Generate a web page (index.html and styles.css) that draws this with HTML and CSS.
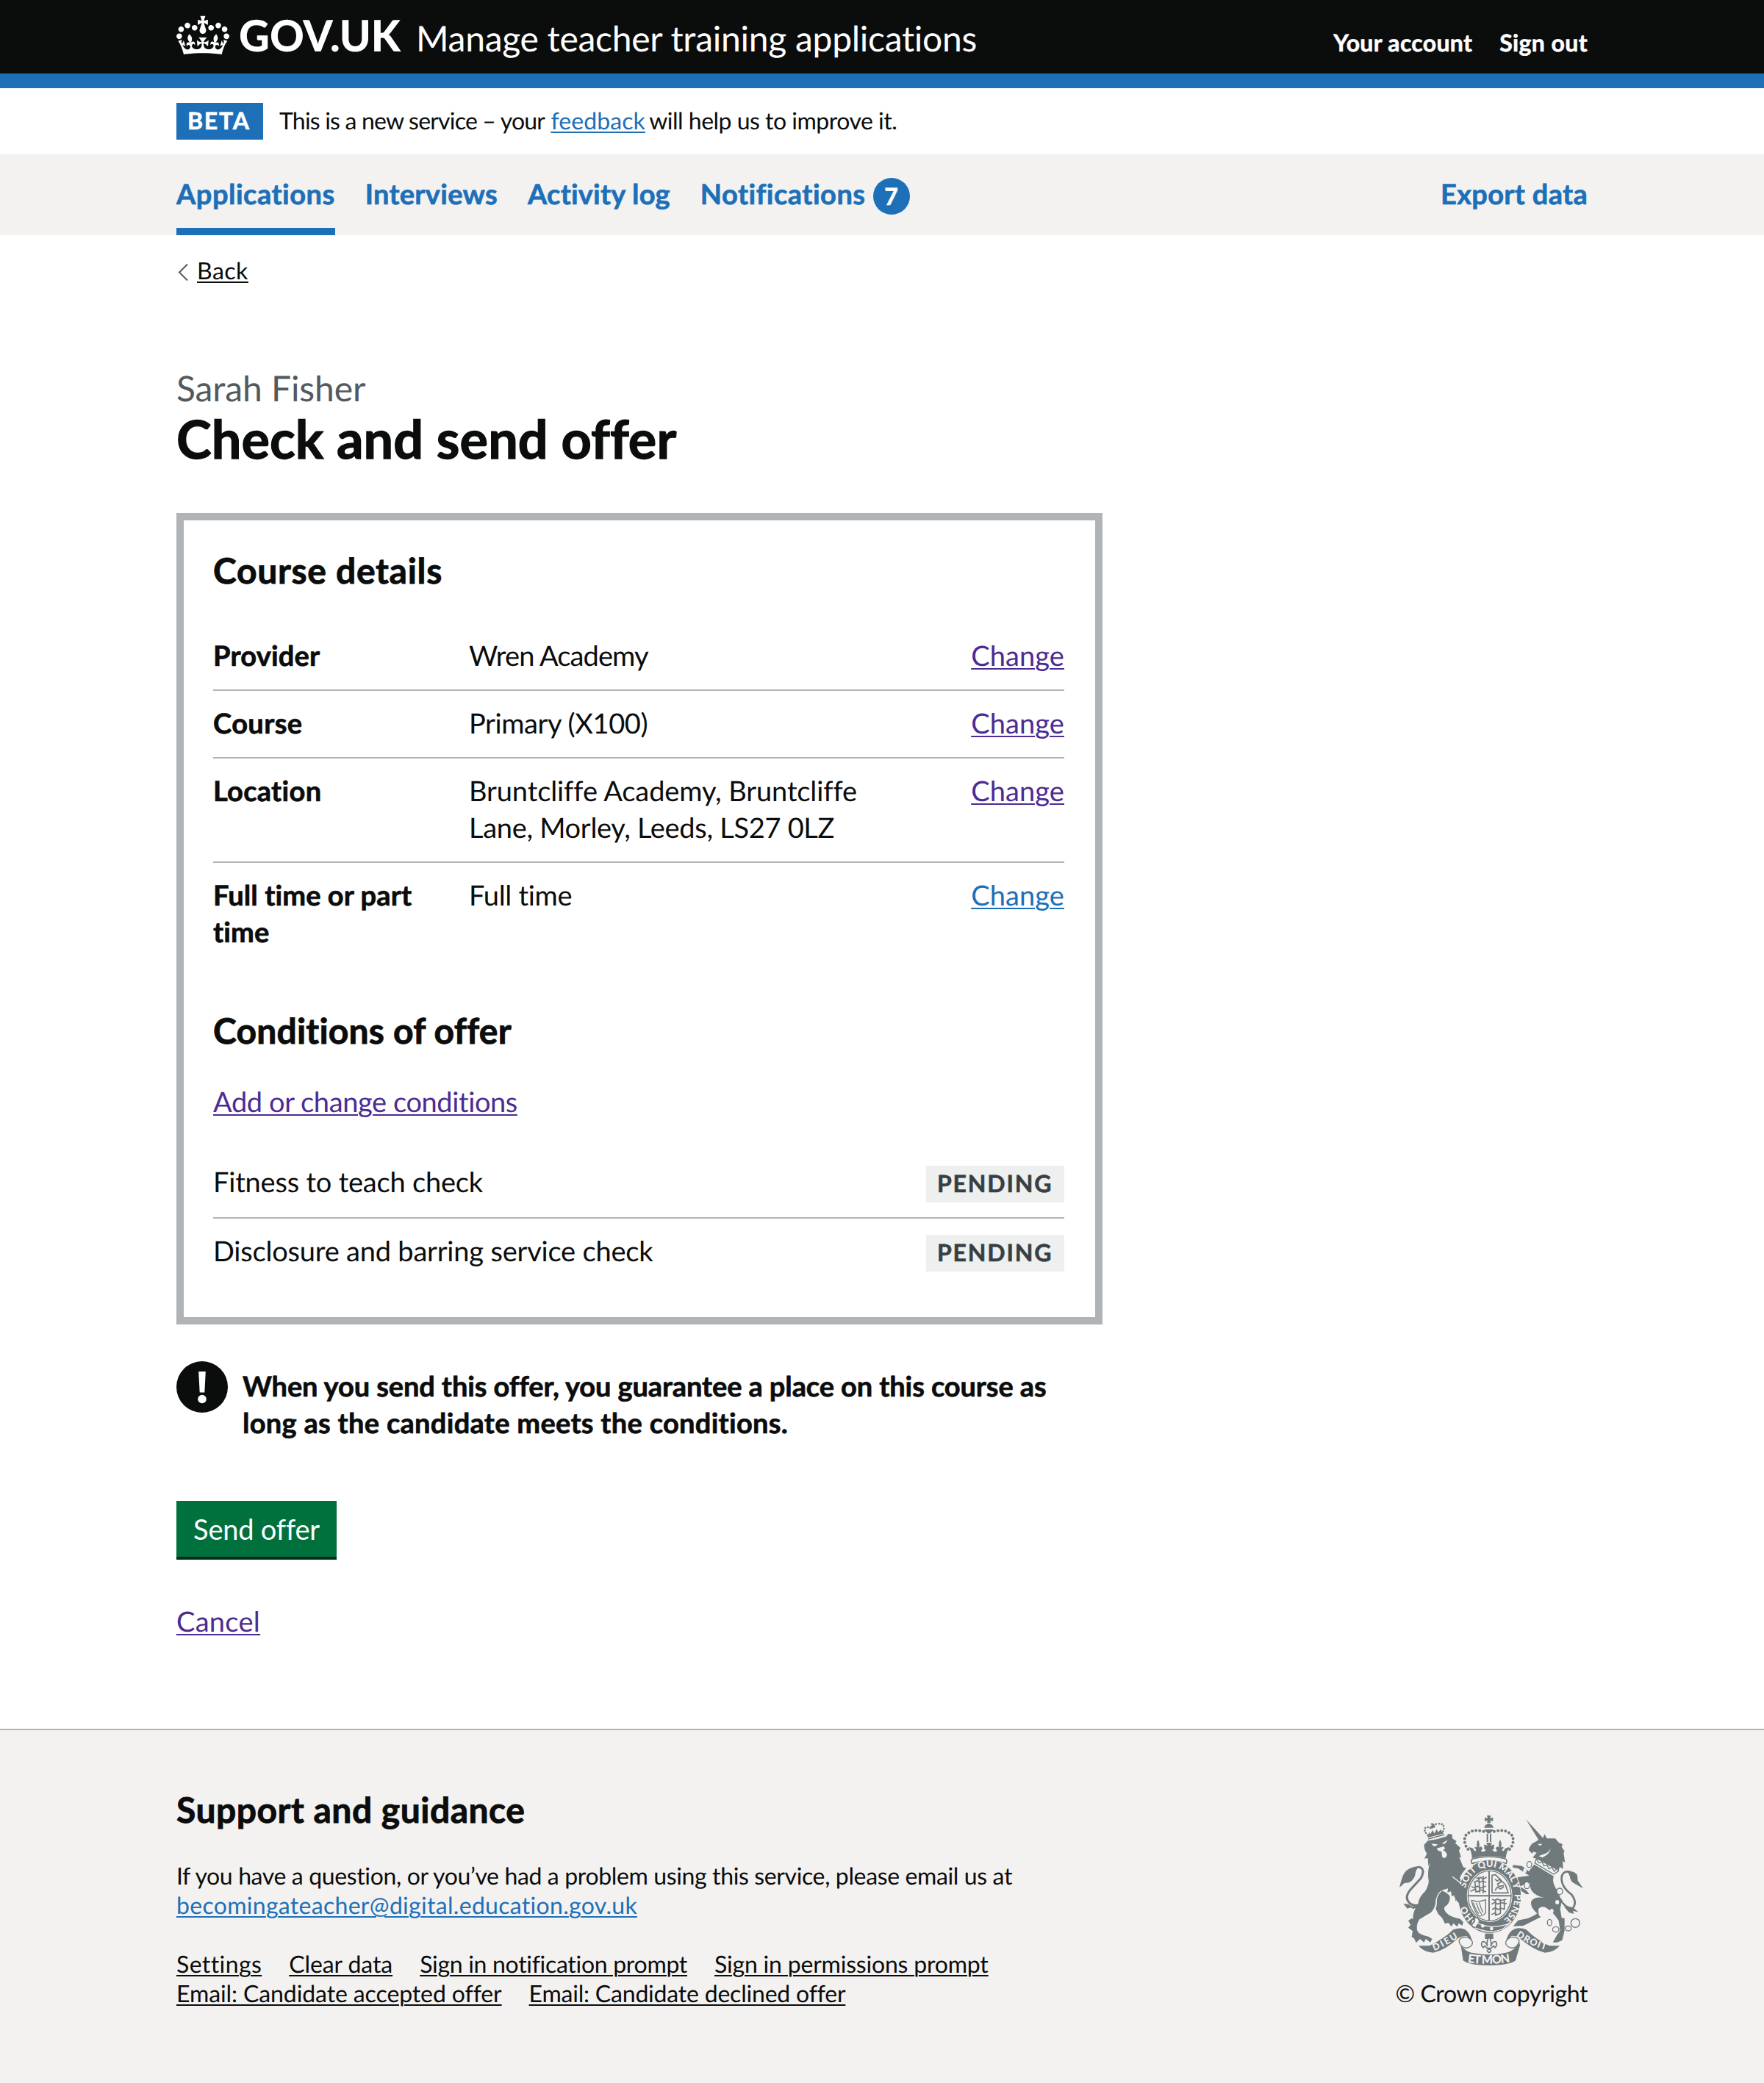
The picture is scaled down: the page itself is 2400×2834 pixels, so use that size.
FILE: index.html
```html
<!DOCTYPE html>
<html lang="en">
<head>
<meta charset="utf-8">
<title>Check and send offer - Manage teacher training applications</title>
<link rel="stylesheet" href="styles.css">
</head>
<body>
<header class="header">
  <div class="container header-row">
    <a class="brand" href="#">
      <svg class="logotype" width="310" height="78" viewBox="0 -8 310 78" fill="#fff">
        <g transform="translate(0 8.7) scale(.5454)"><path fill-rule="evenodd" d="M25 30.2c3.5 1.5 7.7-.2 9.1-3.7 1.5-3.6-.2-7.8-3.9-9.2-3.6-1.4-7.6.3-9.1 3.9-1.4 3.5.3 7.5 3.9 9zM9 39.5c3.6 1.5 7.8-.2 9.2-3.7 1.5-3.6-.2-7.8-3.9-9.1-3.6-1.5-7.6.2-9.1 3.8-1.4 3.5.3 7.5 3.8 9zM4.4 57.2c3.5 1.5 7.7-.2 9.1-3.8 1.5-3.6-.2-7.7-3.9-9.1-3.5-1.5-7.6.3-9.1 3.8-1.4 3.5.3 7.6 3.9 9.1zm38.3-21.4c3.5 1.5 7.7-.2 9.1-3.8 1.5-3.6-.2-7.7-3.9-9.1-3.6-1.5-7.6.3-9.1 3.8-1.3 3.6.4 7.7 3.9 9.1zm64.4-5.6c-3.6 1.5-7.8-.2-9.1-3.7-1.5-3.6.2-7.8 3.8-9.2 3.6-1.4 7.7.3 9.2 3.9 1.3 3.5-.4 7.5-3.9 9zm15.9 9.3c-3.6 1.5-7.7-.2-9.1-3.7-1.5-3.6.2-7.8 3.7-9.1 3.6-1.5 7.7.2 9.2 3.8 1.5 3.5-.3 7.5-3.8 9zm4.7 17.7c-3.6 1.5-7.8-.2-9.2-3.8-1.5-3.6.2-7.7 3.9-9.1 3.6-1.5 7.7.3 9.2 3.8 1.3 3.5-.4 7.6-3.9 9.1zM89.3 35.8c-3.6 1.5-7.8-.2-9.2-3.8-1.4-3.6.2-7.7 3.9-9.1 3.6-1.5 7.7.3 9.2 3.8 1.4 3.6-.3 7.7-3.9 9.1zM69.7 17.7l8.9 4.7V9.3l-8.9 2.8c-.2-.3-.5-.6-.9-.9L72.4 0H59.6l3.5 11.2c-.3.3-.6.5-.9.9l-8.8-2.8v13.1l8.8-4.7c.3.3.6.7.9.9l-5 15.4v.1c-.2.8-.4 1.6-.4 2.4 0 4.1 3.1 7.5 7 8.1h.2c.3 0 .7.1 1 .1.4 0 .7 0 1-.1h.2c4-.6 7.1-4.1 7.1-8.1 0-.8-.1-1.7-.4-2.4V34l-5.1-15.4c.4-.2.7-.6 1-.9zM66 92.8c16.9 0 32.8 1.1 47.1 3.2 4-16.9 8.9-26.7 14-33.5l-9.6-3.4c1 4.9 1.1 7.2 0 10.2-1.5-1.4-3-4.3-4.2-8.7L108.6 76c2.8-2 5-3.2 7.5-3.3-4.4 9.4-10 11.9-13.6 11.2-4.3-.8-6.3-4.6-5.6-7.9 1-4.7 5.7-5.9 8-.5 4.3-8.7-3-11.4-7.6-8.8 7.1-7.2 7.9-13.5 2.1-21.1-8 6.1-8.1 12.3-4.5 20.8-4.7-5.4-12.1-2.5-9.5 6.2 3.4-5.2 7.9-2 7.2 3.1-.6 4.3-6.4 7.8-13.5 7.2-10.3-.9-10.9-8-11.2-13.8 2.5-.5 7.1 1.8 11 7.3L80.2 60c-4.1 4.4-8 5.3-12.3 5.4 1.4-4.4 8-11.6 8-11.6H55.5s6.4 7.2 7.9 11.6c-4.2-.1-8-1-12.3-5.4l1.4 16.4c3.9-5.5 8.5-7.7 10.9-7.3-.3 5.8-.9 12.8-11.1 13.8-7.2.6-12.9-2.9-13.5-7.2-.7-5 3.8-8.3 7.1-3.1 2.7-8.7-4.6-11.6-9.4-6.2 3.7-8.5 3.6-14.7-4.6-20.8-5.8 7.6-5 13.9 2.2 21.1-4.7-2.6-11.9.1-7.7 8.8 2.3-5.5 7.1-4.2 8.1.5.7 3.3-1.3 7.1-5.7 7.9-3.5.7-9-1.8-13.5-11.2 2.5.1 4.7 1.3 7.5 3.3l-4.7-15.4c-1.2 4.4-2.7 7.2-4.3 8.7-1.1-3-.9-5.3 0-10.2l-9.5 3.4c5 6.9 9.9 16.7 14 33.5 14.8-2.1 30.8-3.2 47.7-3.2z"/></g>
        <text class="logotype-text" x="85" y="57" textLength="220" lengthAdjust="spacingAndGlyphs">GOV.UK</text>
      </svg>
      <span class="service-name">Manage teacher training applications</span>
    </a>
    <nav class="account">
      <a class="track-p3" href="#">Your account</a>
      <a class="track-p4" href="#">Sign out</a>
    </nav>
  </div>
</header>

<div class="container phase">
  <strong class="tag tag-beta">BETA</strong>
  <span class="phase-text"><span class="track-n8">This is a new service – your</span> <a class="link track-p1" href="#">feedback</a> <span class="phase-end">will help us to improve it.</span></span>
</div>

<nav class="primary">
  <div class="container primary-row">
    <a class="current track-p5" href="#">Applications</a>
    <a class="track-p3" href="#">Interviews</a>
    <a class="track-p2" href="#">Activity log</a>
    <a class="track-p5" href="#">Notifications</a>
    <span class="count">7</span>
    <a class="export track-p3" href="#">Export data</a>
  </div>
</nav>

<main class="container main">
  <a class="back" href="#"><svg width="16" height="24" viewBox="0 0 16 24" fill="none" stroke="#505a5f" stroke-width="2"><path d="M15 1.500L4 12.500l11 11"/></svg><span class="link link-black track-p5">Back</span></a>

  <p class="caption track-n1">Sarah Fisher</p>
  <h1 class="track-p1">Check and send offer</h1>

  <section class="panel">
    <h2 class="track-p7">Course details</h2>
    <dl class="summary">
      <div class="row"><dt class="track-p2">Provider</dt><dd class="track-n9">Wren Academy</dd><a class="link visited track-p1" href="#">Change</a></div>
      <div class="row"><dt class="track-p4">Course</dt><dd class="track-n4">Primary (X100)</dd><a class="link visited track-p1" href="#">Change</a></div>
      <div class="row"><dt class="track-p3">Location</dt><dd><span class="track-n1">Bruntcliffe Academy, Bruntcliffe</span><br><span class="track-n3">Lane, Morley, Leeds, LS27 0LZ</span></dd><a class="link visited track-p1" href="#">Change</a></div>
      <div class="row"><dt class="track-p1">Full time or part<br>time</dt><dd class="track-n3">Full time</dd><a class="link track-p1" href="#">Change</a></div>
    </dl>
    <h2 class="conditions-title track-p2">Conditions of offer</h2>
    <p class="conditions-link"><a class="link visited track-n4" href="#">Add or change conditions</a></p>
    <ul class="conditions">
      <li><span class="track-n2">Fitness to teach check</span><strong class="tag tag-grey">PENDING</strong></li>
      <li><span class="track-n2">Disclosure and barring service check</span><strong class="tag tag-grey">PENDING</strong></li>
    </ul>
  </section>

  <div class="warning">
    <svg width="70" height="70" viewBox="0 0 70 70"><circle cx="35" cy="35" r="35" fill="#0b0c0c"/><path d="M30.200 14h9.600l-1.500 28.500h-6.600z" fill="#fff"/><circle cx="35" cy="51.500" r="5.800" fill="#fff"/></svg>
    <p><span class="track-n1">When you send this offer, you guarantee a place on this course as</span><br><span class="track-p3">long as the candidate meets the conditions.</span></p>
  </div>

  <button class="button track-n2" type="button">Send offer</button>
  <p class="cancel"><a class="link visited track-p3" href="#">Cancel</a></p>
</main>

<footer class="footer">
  <div class="container footer-row">
    <div class="footer-main">
      <h2 class="track-p5">Support and guidance</h2>
      <p><span class="contact">If you have a question, or you’ve had a problem using this service, please email us at</span><br><a class="link track-p3" href="#">becomingateacher@digital.education.gov.uk</a></p>
      <ul class="footer-links">
        <li><a class="link link-black track-p4" href="#">Settings</a></li>
        <li><a class="link link-black track-n1" href="#">Clear data</a></li>
        <li><a class="link link-black track-n3" href="#">Sign in notification prompt</a></li>
        <li><a class="link link-black track-n2" href="#">Sign in permissions prompt</a></li>
        <li><a class="link link-black track-n1" href="#">Email: Candidate accepted offer</a></li>
        <li><a class="link link-black track-n2" href="#">Email: Candidate declined offer</a></li>
      </ul>
    </div>
    <div class="copyright">
      <svg class="arms" width="250" height="204" viewBox="72 90 750 612" fill="#70797b" stroke-linejoin="round">
        <defs>
          <path id="garter" pathLength="100" d="M440 536A102 118 0 0 1 338 418A102 118 0 0 1 440 300A102 118 0 0 1 542 418A102 118 0 0 1 440 536"/>
          <path id="motto-left" d="M214 642Q262 624 322 582"/>
          <path id="motto-mid" d="M350 690Q440 702 540 686"/>
          <path id="motto-right" d="M548 582Q606 624 688 644"/>
        </defs>
        <!-- lion -->
        <path d="M172 211L188 193L225 187L262 176L272 165L287 167L288 184L305 195L300 203L321 222L315 234L324 262L316 260L332 300L345 306Q328 322 318 346L332 368Q350 398 345 436L338 452L326 434L318 448L310 428L300 440L302 414L286 420L282 400L268 404L270 388L243 396Q262 402 277 418Q281 440 266 456Q246 466 262 486Q280 506 320 512L333 526L328 540L314 530L308 544L292 530L284 544L272 528L258 532L246 508L230 492L220 470Q228 452 222 428Q218 480 190 492L154 514Q140 534 144 558Q150 578 190 584L206 594L198 608L180 594L172 608L156 594L140 610L132 592L122 586L126 562L108 548L118 536L108 520L122 510L128 514Q124 484 148 452Q150 424 178 398Q196 366 190 348Q186 310 198 282L190 296L188 264L174 266L184 246L176 232Z"/>
        <g fill="#f3f2f1"><path d="M202 205L228 208Q222 218 212 216zM246 204L268 190Q264 204 252 207zM224 224L254 216L258 226L250 232Q266 240 266 252Q258 272 246 258L244 238L230 234z"/></g>
        <path d="M288 340L322 366M243 398Q222 414 222 446" fill="none" stroke="#f3f2f1" stroke-width="4"/>
        <path d="M182 440Q140 470 114 448Q90 426 116 394L160 346Q180 306 150 300" fill="none" stroke="#70797b" stroke-width="9"/>
        <path d="M152 296Q108 300 90 328Q80 350 72 384L92 366L112 364Q136 350 138 322Q142 306 152 302zM88 450L108 452L126 462L156 448L148 464L128 472L118 466L104 470z"/>
        <g fill="none" stroke="#70797b"><path d="M188 170Q172 156 176 144Q182 132 204 144Q206 126 230 124Q254 122 254 142L250 156" stroke-width="8" stroke-linecap="round" stroke-dasharray="0 11"/><path d="M187 176L250 160" stroke-width="8"/><path d="M189 186L256 168" stroke-width="4"/></g>
        <path d="M200 122L212 122L208 132L218 130L216 140L207 140L206 146L200 140L196 134L204 132zM192 158L198 166L208 150L214 164L224 146L230 158L242 146L246 162L190 178z"/>
        <!-- crown -->
        <path d="M429 90h16l-3 12 12-4v16l-12-4 3 10h-16l3-10-12 4v-16l12 4zM418 140Q420 126 437 122Q454 126 456 140zM419 147h36Q450 160 437 164Q424 160 419 147z"/>
        <g fill="none" stroke="#70797b"><path d="M352 228Q330 200 342 172Q366 142 418 156" stroke-width="12" stroke-linecap="round" stroke-dasharray="0 15.500"/><path d="M522 228Q544 200 532 172Q508 142 456 156" stroke-width="12" stroke-linecap="round" stroke-dasharray="0 15.500"/><path d="M431 164v34M444 164v34" stroke-width="6"/></g>
        <path d="M355 218L374 226Q376 238 384 234Q386 226 378 222Q384 214 390 222Q384 204 393 190Q402 204 396 222Q402 212 410 222Q412 230 404 234Q414 244 426 230L418 228V208L432 214L426 202H450L444 214L458 208V228L450 230Q462 244 472 234Q464 230 466 222Q474 212 480 222Q474 204 483 190Q492 204 486 222Q492 214 498 222Q490 226 492 234Q500 238 502 226L521 218Q508 240 506 264Q438 246 368 264Q368 240 355 218Z"/>
        <path d="M374 266Q438 250 502 266Q514 270 508 286Q438 264 368 286Q360 270 374 266z" fill="#f3f2f1" stroke="#70797b" stroke-width="5"/>
        <!-- unicorn -->
        <path d="M588 105L658 182L664 166L674 184L708 184L722 200L738 208L734 218L746 236L742 244L748 282L738 276L740 308L726 300L722 316L630 266L616 262L632 242L618 238L614 246L600 232L602 222L612 206L640 190Z"/>
        <path d="M656 262Q690 246 690 216Q690 232 672 244L640 256zM636 206l20 0-10 8z" fill="#f3f2f1"/>
        <path d="M630 268L624 284L702 330L722 316L716 306L704 318L694 302L682 308L674 292L662 296L654 280L642 284z" fill="#f3f2f1" stroke="#70797b" stroke-width="4"/>
        <path d="M622 290L702 338Q692 360 716 396Q736 436 732 452L728 472L734 508L746 510V560L736 600L716 608H698L716 576L728 560L722 520Q700 484 676 470Q656 456 640 470Q636 500 650 504L578 540L536 542L556 518L596 510Q622 500 634 490Q604 464 610 440Q622 420 662 426Q600 412 606 366L580 372L564 380L590 396L602 410L590 412L570 398L540 364L556 342L602 336L556 306L534 302L536 292L572 296L600 318Z"/>
        <path d="M728 430Q744 466 778 470Q800 446 774 412Q730 380 734 340Q742 312 772 322" fill="none" stroke="#70797b" stroke-width="8"/>
        <path d="M758 318Q788 316 798 334L800 356L822 388L790 370Q768 360 768 340zM744 462L764 486L784 492L780 480L802 484L780 466z"/>
        <g fill="none" stroke="#70797b" stroke-width="4"><ellipse cx="602" cy="290" rx="10" ry="12"/><ellipse cx="592" cy="375" rx="11" ry="14" fill="#f3f2f1"/><ellipse cx="726" cy="400" rx="12" ry="13" fill="#f3f2f1"/><ellipse cx="685" cy="527" rx="9" ry="13"/><ellipse cx="710" cy="555" rx="13" ry="11"/><ellipse cx="761" cy="551" rx="12" ry="10"/><circle cx="790" cy="529" r="18"/></g>
        <g fill="#f3f2f1"><ellipse cx="584" cy="315" rx="7" ry="9"/><ellipse cx="716" cy="444" rx="8" ry="9"/><ellipse cx="694" cy="480" rx="7" ry="9"/></g>
        <!-- garter and shield -->
        <ellipse cx="440" cy="421" rx="131" ry="152" fill="#f3f2f1"/>
        <ellipse cx="440" cy="421" rx="128" ry="149"/>
        <ellipse cx="440" cy="418" rx="93" ry="107" fill="#f3f2f1"/>
        <ellipse cx="440" cy="418" rx="88" ry="102" fill="none" stroke="#70797b" stroke-width="4"/>
        <path d="M438 316V520M352 418H528" stroke="#70797b" stroke-width="6"/>
        <g fill="none" stroke="#70797b" stroke-width="5"><path d="M386 344l10 6 8-8 8 8 16-8M376 362l14-6 8 8 12-6 16 6M366 380l14 6 10-8 14 8 22-8M362 400l16-8 12 10 14-8 22 8M396 340l4 66M414 336v72M380 360l4 44"/><path d="M450 334l14-2 40 40 12 34h-66zM462 350l10 8 10-10 4 14-14 8 6 10 20-4M462 396l10-14 12 8 14-8"/><path d="M450 432l14 6 8-8 12 8 24-6M448 452l14-8 10 8 14-6 24 4M450 474l14-8 10 8 12-6 16 6M448 494l14-6 8 8 14-6M464 432v68M484 432v60M500 434v40"/></g>
        <path d="M366 436Q396 446 424 434V488Q408 506 394 498Q376 480 366 436zM374 446Q380 474 396 490M386 446Q392 472 408 494M398 444Q402 466 414 486" fill="none" stroke="#70797b" stroke-width="4"/>
        <g class="motto"><text><textPath href="#garter" startOffset="10.500%">HO</textPath></text><text><textPath href="#garter" startOffset="29.500%">SOIT</textPath></text><text><textPath href="#garter" startOffset="43.500%">QUI</textPath></text><text><textPath href="#garter" startOffset="55%">MAL</textPath></text><text><textPath href="#garter" startOffset="67.500%">Y</textPath></text><text><textPath href="#garter" startOffset="74%">PENSE</textPath></text></g>
        <path d="M372 518Q430 560 520 532L496 552Q440 580 366 542z" stroke="#f3f2f1" stroke-width="4"/>
        <circle cx="412" cy="541" r="7" fill="#f3f2f1"/><circle cx="448" cy="552" r="7" fill="#f3f2f1"/>
        <path d="M398 520Q392 500 376 510Q384 524 370 530Q362 548 382 546" fill="#f3f2f1" stroke="#70797b" stroke-width="5"/>
        <path d="M310 444L296 422L300 400L288 396L318 368L340 390L348 430L338 452L328 434L320 448z"/>
        <!-- fleur-de-lis -->
        <path d="M421 572h34v22h-34z"/>
        <path d="M438 586Q426 602 431 622Q422 600 410 606Q402 618 414 630L420 622L430 632H446L456 622L462 630Q474 618 466 606Q454 600 445 622Q450 602 438 586zM438 632L430 642Q438 656 446 642z" fill="#f3f2f1" stroke="#70797b" stroke-width="5"/>
        <!-- ribbons -->
        <path d="M150 622H194Q250 596 292 556Q326 544 346 560Q364 576 370 608Q358 600 348 582Q330 580 312 590Q260 640 210 650Q170 648 150 622zM726 622H684Q628 596 590 556Q556 542 530 560Q512 576 506 608Q516 600 528 582Q546 578 562 590Q620 640 666 650Q706 648 726 622z"/>
        <path d="M318 592Q314 616 332 630Q352 652 378 652Q438 664 498 652Q524 650 544 630Q562 616 558 592L564 620L546 682Q520 702 438 702Q356 702 332 682z"/>
        <path d="M340 586Q308 590 318 612Q330 634 352 630Q376 620 368 602Q356 586 340 586zM536 586Q568 590 558 612Q546 634 524 630Q500 620 508 602Q520 586 536 586z" fill="#f3f2f1" stroke="#70797b" stroke-width="4"/>
        <g class="motto"><text textLength="112"><textPath href="#motto-left">DIEU</textPath></text><text class="motto-mid" textLength="174"><textPath href="#motto-mid">ET MON</textPath></text><text textLength="134"><textPath href="#motto-right">DROIT</textPath></text></g>
      </svg>
      <span class="track-n4">© Crown copyright</span>
    </div>
  </div>
</footer>
</body>
</html>
```
FILE: styles.css
```css
* { box-sizing: border-box; }
body {
  margin: 0;
  background: #fff;
  color: #0b0c0c;
  font-family: Lato, "Liberation Sans", sans-serif;
  font-size: 38px;
  line-height: 50px;
  font-variant-ligatures: none;
  text-rendering: geometricPrecision;
}
h1, h2, p, ul, dl, dd { margin: 0; padding: 0; }
ul { list-style: none; }
a { color: inherit; text-decoration: none; }
.container { width: 1920px; margin: 0 auto; }

.link {
  color: #1d70b8;
  text-decoration: underline;
  text-decoration-thickness: 2px;
  text-underline-offset: 3px;
}
.visited { color: #4c2c92; }
.link-black { color: #0b0c0c; }

/* letter spacing steps */
.track-n9 { letter-spacing: -.9px; }
.track-n8 { letter-spacing: -.8px; }
.track-n4 { letter-spacing: -.4px; }
.track-n3 { letter-spacing: -.3px; }
.track-n2 { letter-spacing: -.2px; }
.track-n1 { letter-spacing: -.1px; }
.track-p1 { letter-spacing: .1px; }
.track-p2 { letter-spacing: .2px; }
.track-p3 { letter-spacing: .3px; }
.track-p4 { letter-spacing: .4px; }
.track-p5 { letter-spacing: .5px; }
.track-p7 { letter-spacing: .7px; }

/* slightly heavier bold */
h1, h2, dt, .tag, .primary, .warning, .account { -webkit-text-stroke: .018em currentColor; }

/* header */
.header { height: 120px; background: #0b0c0c; border-bottom: 20px solid #1d70b8; color: #fff; }
.header-row { display: flex; justify-content: space-between; }
.brand { display: flex; padding-top: 5px; }
.logotype { display: block; }
.logotype-text { font: 900 59px Lato, "Liberation Sans", sans-serif; }
.service-name { margin: 18px 0 0 16px; font-size: 48px; line-height: 60px; letter-spacing: -.28px; }
.account { display: flex; gap: 37px; padding-top: 38px; font-size: 32px; line-height: 40px; font-weight: 700; }

/* phase banner */
.phase { display: flex; align-items: flex-start; padding: 20px 0; height: 90px; font-size: 32px; line-height: 40px; }
.phase-text { margin: 4px 0 0 22px; }
.phase-end { margin-left: -3px; letter-spacing: -.5px; }
.tag { font-size: 32px; font-weight: 700; line-height: 40px; height: 50px; padding: 4px 14px 6px 15px; letter-spacing: 1.8px; }
.tag-beta { width: 118px; background: #1d70b8; color: #fff; }
.tag-grey { width: 188px; background: #eeefef; color: #383f43; }

/* primary navigation */
.primary { height: 110px; background: #f3f2f1; color: #1d70b8; font-weight: 700; }
.primary-row { display: flex; }
.primary-row a { height: 110px; padding-top: 29px; margin-right: 41px; }
.primary-row .current { border-bottom: 10px solid #1d70b8; }
.primary-row .count {
  width: 50px; height: 50px; margin: 32px 0 0 -31px;
  border-radius: 50%; background: #1d70b8; color: #fff;
  font-size: 32px; line-height: 50px; text-align: center;
}
.primary-row .export { margin: 0 0 0 auto; }

/* main */
.main { height: 2032px; }
.back { display: flex; width: 98px; gap: 12px; padding-top: 28px; font-size: 32px; line-height: 40px; }
.back svg { margin-top: 10px; flex: none; }
.caption { margin-top: 111px; color: #505a5f; font-size: 48px; line-height: 60px; }
h1 { margin-top: -2px; font-size: 72px; line-height: 80px; font-weight: 700; }
h2 { font-size: 48px; line-height: 60px; font-weight: 700; }
.panel { width: 1260px; height: 1104px; margin-top: 61px; padding: 39px 42px 0 40px; border: 10px solid #b1b4b6; }
.summary { margin-top: 41px; }
.row { display: grid; grid-template-columns: 348px 1fr auto; align-items: start; padding: 19px 0 21px; border-bottom: 2px solid #b1b4b6; }
.row:last-child { border-bottom: 0; }
dt { font-weight: 700; }
.conditions-title { margin-top: 59px; }
.conditions-link { margin-top: 41px; }
.conditions { margin-top: 40px; }
.conditions li { display: flex; justify-content: space-between; padding: 19px 0; border-bottom: 2px solid #b1b4b6; height: 94px; }
.conditions li:last-child { border-bottom: 0; }
.conditions .tag { margin-top: 3px; }

.warning { display: flex; gap: 20px; margin-top: 50px; font-weight: 700; }
.warning p { padding-top: 9px; white-space: nowrap; }
.button {
  display: block; width: 218px; height: 76px; margin-top: 81px; padding: 13px 0;
  border: 0; background: #00703c; box-shadow: 0 4px 0 #002d18; color: #fff;
  font: 38px/50px Lato, "Liberation Sans", sans-serif;
}
.cancel { margin-top: 63px; }

/* footer */
.footer { height: 482px; background: #f3f2f1; border-top: 2px solid #b1b4b6; font-size: 32px; line-height: 40px; }
.footer-row { display: flex; justify-content: space-between; }
.footer-main { width: 1260px; padding-top: 79px; }
.footer-main p { margin-top: 39px; }
.contact { letter-spacing: -.37px; }
.footer-links { display: flex; flex-wrap: wrap; column-gap: 37px; width: 1200px; margin-top: 40px; }
.copyright { display: flex; flex-direction: column; align-items: flex-end; padding-top: 116px; }
.copyright span { margin-top: 18px; }
.arms { margin-right: 6px; }
.motto { fill: #f3f2f1; font: 900 38px Lato, "Liberation Sans", sans-serif; }
.motto-mid { font-size: 48px; }
```
